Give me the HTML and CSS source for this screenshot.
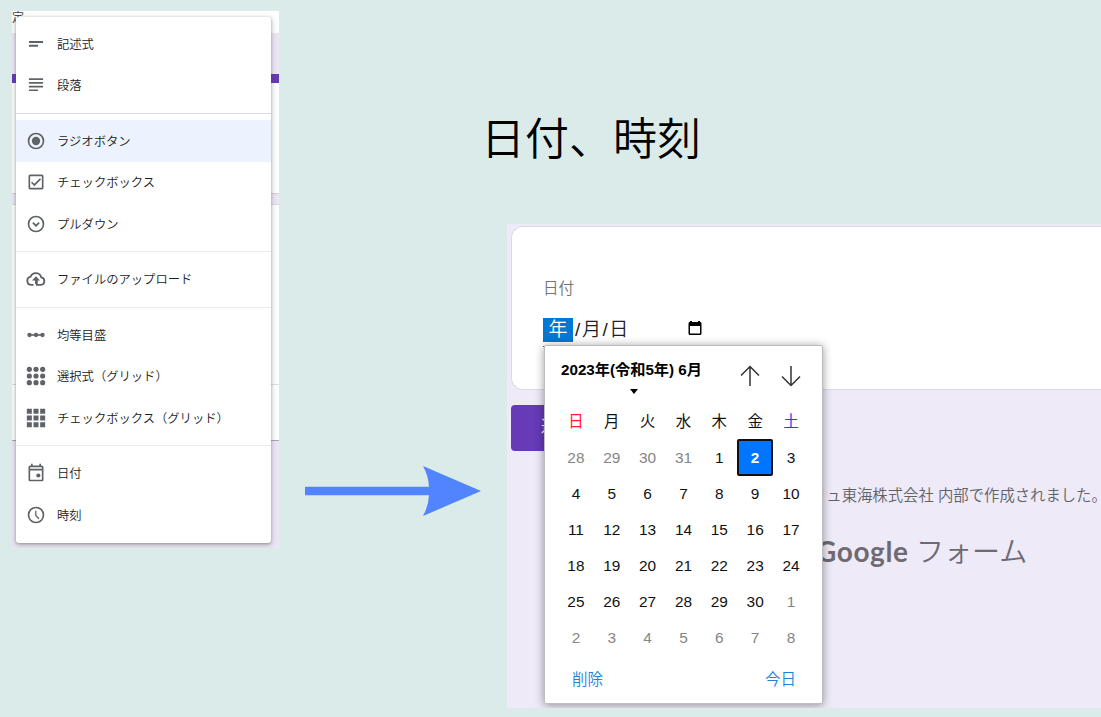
FILE: index.html
```html
<!DOCTYPE html>
<html lang="ja">
<head>
    <meta charset="UTF-8">
    <title>日付、時刻</title>
    <link rel="stylesheet" href="styles.css">
</head>
<body>
<div class="slide">

    <div class="shot-menu">
        <div class="back">
            <div class="back-top">定</div>
            <div class="back-gap"></div>
            <div class="back-bar"></div>
            <div class="back-card first"></div>
            <div class="back-space"></div>
            <div class="back-card second"><div class="back-line"></div></div>
        </div>
        <ul class="menu">
            <li class="item">
                <svg class="icon" viewBox="0 0 24 24"><path d="M3.500 8.500h17v2.400h-17zM3.500 13h11v2.400h-11z"/></svg>
                <span>記述式</span>
            </li>
            <li class="item">
                <svg class="icon" viewBox="0 0 24 24"><path d="M3.500 4h17v2h-17zM3.500 8.500h17v2h-17zM3.500 13h17v2h-17zM3.500 17.300h11v2h-11z"/></svg>
                <span>段落</span>
            </li>
            <li class="sep strong"></li>
            <li class="item active">
                <svg class="icon" viewBox="0 0 24 24"><path d="M12 7a5 5 0 1 0 0 10 5 5 0 0 0 0-10zm0-5a10 10 0 1 0 0 20 10 10 0 0 0 0-20zm0 18a8 8 0 1 1 0-16 8 8 0 0 1 0 16z"/></svg>
                <span>ラジオボタン</span>
            </li>
            <li class="item">
                <svg class="icon" viewBox="0 0 24 24"><path d="M19 3H5c-1.1 0-2 .9-2 2v14c0 1.100.9 2 2 2h14c1.100 0 2-.9 2-2V5c0-1.100-.9-2-2-2zm0 16H5V5h14v14zM18 9l-1.400-1.400-6.600 6.600-2.600-2.600L6 13l4 4z"/></svg>
                <span>チェックボックス</span>
            </li>
            <li class="item">
                <svg class="icon" viewBox="0 0 24 24"><path d="M12 4a8 8 0 1 1 0 16 8 8 0 0 1 0-16m0-2a10 10 0 1 0 0 20 10 10 0 0 0 0-20zm0 13.500l-4.500-4.500 1.500-1.500 3 3 3-3 1.500 1.500z"/></svg>
                <span>プルダウン</span>
            </li>
            <li class="sep"></li>
            <li class="item">
                <svg class="icon" viewBox="0 0 24 24"><path d="M9 19H6.500A5 5 0 0 1 5.600 9.100 6.700 6.700 0 0 1 18.300 10.100 4.500 4.500 0 0 1 18 19H13V13" fill="none" stroke="#5f6368" stroke-width="2.200"/><path d="M12 8.800l4.800 5H13.200V18h-2.400v-4.200H7.200z"/></svg>
                <span>ファイルのアップロード</span>
            </li>
            <li class="sep"></li>
            <li class="item">
                <svg class="icon" viewBox="0 0 24 24"><path d="M4 11h16v2H4z"/><circle cx="4.200" cy="12" r="2.600"/><circle cx="12" cy="12" r="2.600"/><circle cx="19.800" cy="12" r="2.600"/></svg>
                <span>均等目盛</span>
            </li>
            <li class="item">
                <svg class="icon" viewBox="0 0 24 24"><circle cx="4" cy="4" r="3.100"/><circle cx="12" cy="4" r="3.100"/><circle cx="20" cy="4" r="3.100"/><circle cx="4" cy="12" r="3.100"/><circle cx="12" cy="12" r="3.100"/><circle cx="20" cy="12" r="3.100"/><circle cx="4" cy="20" r="3.100"/><circle cx="12" cy="20" r="3.100"/><circle cx="20" cy="20" r="3.100"/></svg>
                <span>選択式（グリッド）</span>
            </li>
            <li class="item">
                <svg class="icon" viewBox="0 0 24 24"><path d="M1 1h6v6H1zM9 1h6v6H9zM17 1h6v6h-6zM1 9h6v6H1zM9 9h6v6H9zM17 9h6v6h-6zM1 17h6v6H1zM9 17h6v6H9zM17 17h6v6h-6z"/></svg>
                <span>チェックボックス（グリッド）</span>
            </li>
            <li class="sep"></li>
            <li class="item">
                <svg class="icon" viewBox="0 0 24 24"><path d="M19 3h-1V1h-2v2H8V1H6v2H5c-1.100 0-2 .9-2 2v15c0 1.100.9 2 2 2h14c1.100 0 2-.9 2-2V5c0-1.100-.9-2-2-2zm0 17H5V9h14v11zm0-13H5V5h14v2z"/><circle cx="14.800" cy="15" r="2.500"/></svg>
                <span>日付</span>
            </li>
            <li class="item">
                <svg class="icon" viewBox="0 0 24 24"><path d="M12 2a10 10 0 1 0 0 20 10 10 0 0 0 0-20zm0 18a8 8 0 1 1 0-16 8 8 0 0 1 0 16zM12.500 7H11v6l4 4 1.200-1.200-3.700-3.500z"/></svg>
                <span>時刻</span>
            </li>
        </ul>
    </div>

    <svg class="arrow" viewBox="0 0 176 50"><path d="M0 20.700H124Q123.500 10 118 0L176 25 118 50Q123.500 40 124 29.300H0z"/></svg>

    <div class="right">
        <h1>日付、時刻</h1>
        <div class="shot-form">
            <div class="card">
                <div class="label">日付</div>
                <div class="date-input">
                    <span class="selected">年</span><span class="rest">/月/日</span>
                    <svg class="cal-icon" viewBox="0 0 14 14"><path d="M2 1V0h2v1h6V0h2v1c1 0 1.500.6 1.500 1.500v10c0 .9-.6 1.500-1.500 1.500H2c-.9 0-1.500-.6-1.500-1.500v-10C.5 1.600 1 1 2 1zm0 4v7.500h10V5z"/></svg>
                </div>
                <div class="underline"></div>
            </div>
            <div class="submit">送信</div>
            <p class="note">リュ東海株式会社 内部で作成されました。</p>
            <div class="brand"><span class="google">Google</span><span class="forms">フォーム</span></div>

            <div class="picker">
                <div class="picker-head">
                    <div class="month">2023年(令和5年) 6月<span class="caret"></span></div>
                    <svg class="nav" viewBox="0 0 20 22"><path d="M10 21V1.500M1 10.500l9-9 9 9"/></svg>
                    <svg class="nav" viewBox="0 0 20 22"><path d="M10 1v19.500M1 11.500l9 9 9-9"/></svg>
                </div>
                <div class="days">
                    <span class="sun">日</span><span>月</span><span>火</span><span>水</span><span>木</span><span>金</span><span class="sat">土</span>
                    <span class="out">28</span><span class="out">29</span><span class="out">30</span><span class="out">31</span><span>1</span><span class="today">2</span><span>3</span>
                    <span>4</span><span>5</span><span>6</span><span>7</span><span>8</span><span>9</span><span>10</span>
                    <span>11</span><span>12</span><span>13</span><span>14</span><span>15</span><span>16</span><span>17</span>
                    <span>18</span><span>19</span><span>20</span><span>21</span><span>22</span><span>23</span><span>24</span>
                    <span>25</span><span>26</span><span>27</span><span>28</span><span>29</span><span>30</span><span class="out">1</span>
                    <span class="out">2</span><span class="out">3</span><span class="out">4</span><span class="out">5</span><span class="out">6</span><span class="out">7</span><span class="out">8</span>
                </div>
                <div class="picker-foot"><span>削除</span><span>今日</span></div>
            </div>
        </div>
    </div>

</div>
</body>
</html>
```
FILE: styles.css
```css
* {
    box-sizing: border-box;
}
body {
    margin: 0;
    background-color: #dbebea;
    font-family: "Liberation Sans", "Noto Sans CJK JP", sans-serif;
}
.slide {
    display: flex;
    width: 1101px;
    height: 717px;
    overflow: hidden;
}

/* question type menu */
.shot-menu {
    position: relative;
    flex: none;
    width: 267px;
    height: 537px;
    margin: 11px 0 0 12px;
    overflow: hidden;
    background-color: #ece7f6;
}
.back-top {
    height: 22px;
    background-color: #fff;
    color: #444;
    font-size: 12px;
    line-height: 15px;
}
.back-gap {
    height: 41px;
}
.back-bar {
    height: 9px;
    background-color: #673ab7;
}
.back-card {
    background-color: #fff;
    border-bottom: 1px solid #d5d2dc;
}
.back-card.first {
    height: 111px;
}
.back-space {
    height: 10px;
}
.back-card.second {
    height: 237px;
    padding-top: 179px;
    border-top: 1px solid #dcd9e2;
    border-bottom-color: #aaa6b2;
}
.back-line {
    border-top: 1px solid #e0e0e0;
}
.menu {
    position: absolute;
    top: 6px;
    left: 4px;
    width: 255px;
    height: 526px;
    margin: 0;
    padding: 6.5px 0 0;
    list-style: none;
    background-color: #fff;
    border-radius: 3px;
    box-shadow: 0 1px 3px rgba(60, 64, 67, .4), 0 2px 6px 1px rgba(60, 64, 67, .2);
}
.item {
    display: flex;
    align-items: center;
    height: 41.3px;
    padding-left: 10px;
    font-size: 12.3px;
    font-weight: 350;
    color: #202124;
}
.item span {
    margin-left: 11px;
    font-family: "Noto Sans CJK JP", sans-serif;
    line-height: 18px;
    white-space: nowrap;
}
.item.active {
    background-color: #ecf3fe;
}
.icon {
    width: 20px;
    height: 20px;
    fill: #5f6368;
}
.sep {
    height: 14.4px;
    padding-top: 7px;
}
.sep::before {
    content: "";
    display: block;
    height: 1px;
    background-color: #e8eaed;
}
.sep.strong::before {
    background-color: #dadce0;
}

.arrow {
    flex: none;
    width: 176px;
    height: 50px;
    margin: 466px 0 0 26px;
    fill: #5284ff;
}

/* title and form */
.right {
    flex: 1;
    min-width: 0;
}
h1 {
    height: 224px;
    margin: 0;
    padding-top: 104px;
    font-family: "Noto Sans CJK JP", sans-serif;
    font-size: 44px;
    font-weight: 350;
    line-height: 64px;
    color: #000;
}
.shot-form {
    position: relative;
    height: 484px;
    margin-left: 26px;
    padding: 2px 0 0 4px;
    overflow: hidden;
    background-color: #eeeaf8;
}
.card {
    height: 164px;
    padding: 50px 0 0 31px;
    background-color: #fff;
    border: 1px solid #dadce0;
    border-right: 0;
    border-radius: 12px 0 0 12px;
}
.label {
    height: 24px;
    font-size: 15.5px;
    font-weight: 350;
    line-height: 24px;
    color: #70757a;
}
.date-input {
    display: flex;
    height: 24px;
    margin-top: 17px;
    font-size: 19px;
    font-weight: 350;
    line-height: 24px;
    color: #202124;
}
.selected {
    width: 30px;
    background-color: #0078d7;
    color: #fff;
    text-align: center;
}
.rest {
    width: 115px;
    padding-left: 2px;
    letter-spacing: 1.6px;
}
.cal-icon {
    width: 14px;
    height: 14px;
    margin-top: 3px;
}
.underline {
    width: 180px;
    height: 1px;
    margin-top: 4px;
    background-color: #673ab7;
}
.submit {
    width: 93px;
    height: 46px;
    margin-top: 15px;
    padding-left: 30px;
    background-color: #673ab7;
    border-radius: 4px;
    color: #fff;
    font-size: 15.5px;
    line-height: 44px;
}
.note {
    margin: 33px 0 0 300px;
    font-size: 15.35px;
    font-weight: 350;
    line-height: 24px;
    white-space: nowrap;
    color: #5f6368;
}
.brand {
    display: flex;
    align-items: baseline;
    margin: 23px 0 0 305px;
    line-height: 40px;
    color: #6d6a72;
}
.google {
    width: 100px;
    font-family: Lato, sans-serif;
    font-size: 28px;
    font-weight: 700;
    letter-spacing: .6px;
}
.forms {
    font-size: 28px;
    font-weight: 350;
}

/* date picker popup */
.picker {
    position: absolute;
    top: 121px;
    left: 37px;
    width: 279px;
    height: 359px;
    padding: 13px 12px 0 13px;
    background-color: #fff;
    border: 1px solid #bdbdbd;
    border-radius: 2px;
    box-shadow: 0 1px 10px rgba(0, 0, 0, .4);
}
.picker-head {
    display: flex;
    height: 45px;
    padding-left: 3px;
}
.month {
    flex: none;
    width: 179px;
    font-size: 15.2px;
    font-weight: bold;
    line-height: 22px;
    white-space: nowrap;
    color: #000;
}
.caret {
    display: block;
    width: 0;
    margin: 8px 0 0 69px;
    border: 4px solid transparent;
    border-top: 5px solid #000;
    border-bottom: 0;
}
.nav {
    flex: none;
    width: 20px;
    height: 22px;
    margin: 6px 21px 0 0;
    fill: none;
    stroke: #333;
    stroke-width: 1.5;
}
.days {
    display: grid;
    grid-template-columns: repeat(7, 35.85px);
    grid-auto-rows: 35.95px;
    color: #111;
    font-size: 15.4px;
    line-height: 36px;
    text-align: center;
}
.sun {
    color: #f22;
}
.sat {
    color: #33f;
}
.out {
    color: #858585;
}
.today {
    margin-top: -1px;
    background-color: #0075ff;
    border: 2px solid #101010;
    border-radius: 2px;
    color: #fff;
    font-weight: bold;
    line-height: 34px;
}
.picker-foot {
    display: flex;
    justify-content: space-between;
    padding: 12px 14px 0;
    color: #1a84d6;
    font-size: 15.5px;
    font-weight: 350;
    line-height: 24px;
}
```
